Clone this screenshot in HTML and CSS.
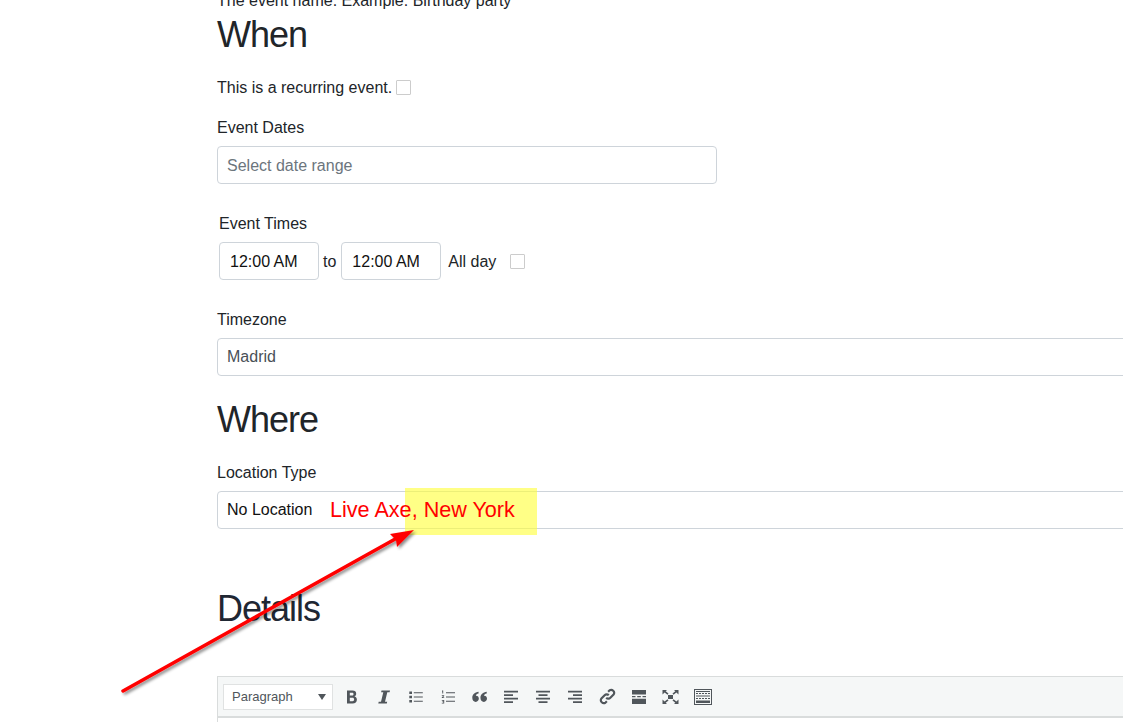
FILE: index.html
```html
<!DOCTYPE html>
<html lang="en">
<head>
<meta charset="utf-8">
<title>Event form</title>
<link rel="stylesheet" href="styles.css">
</head>
<body>
<main class="form">
  <p class="help">The event name. Example: Birthday party</p>
  <h2 class="heading when">When</h2>
  <div class="recurring"><span class="low">This is a recurring event.</span><span class="check"></span></div>
  <label class="label dates-label">Event Dates</label>
  <div class="control short placeholder">Select date range</div>
  <div class="times">
    <label class="label times-label">Event Times</label>
    <div class="times-row">
      <div class="control time">12:00 AM</div>
      <span class="to low">to</span>
      <div class="control time">12:00 AM</div>
      <span class="allday low">All day</span>
      <span class="check"></span>
    </div>
  </div>
  <label class="label tz-label">Timezone</label>
  <div class="control wide muted">Madrid</div>
  <h2 class="heading where">Where</h2>
  <label class="label loc-label">Location Type</label>
  <div class="control wide loc">No Location</div>
  <h2 class="heading details">Details</h2>
  <div class="toolbar">
    <div class="select"><span>Paragraph</span><i class="caret"></i></div>
    <div class="tools">
      <span class="tool"><svg class="ic b" viewBox="0 0 14 14"><path d="M2 .5h5.500c2.400 0 3.700 1.200 3.700 3.200 0 1.300-.7 2.300-1.800 2.700 1.500.3 2.500 1.400 2.500 3 0 2.400-1.700 4.100-4.200 4.100H2V.5zm2.800 2.300v2.800h2.300c.9 0 1.400-.5 1.400-1.400s-.5-1.400-1.400-1.400H4.800zm0 5v3.400h2.700c1 0 1.600-.6 1.600-1.700s-.6-1.700-1.600-1.700H4.800z"/></svg></span>
      <span class="tool"><svg class="ic" viewBox="0 0 14 14"><path d="M4.500.5h8.500l-.4 1.700h-2.300L8 11.800h2.200l-.4 1.700H1.300l.4-1.700h2.300l2.300-9.600H4.100z"/></svg></span>
      <span class="tool"><svg class="ic" viewBox="0 0 14 14"><path d="M.3 1.500h2.700v2.400H.3zM.3 5.800h2.700v2.400H.3zM.3 10.100h2.700v2.400H.3zM4.800 2.200h9v1h-9zM4.800 6.500h9v1h-9zM4.800 10.800h9v1h-9z"/></svg></span>
      <span class="tool"><svg class="ic" viewBox="0 0 14 14"><path d="M1 .5h1.200v3H1.300V1.400H1zM.8 5.300h2.400V6L1.900 7.300h1.300V8H.8v-.7l1.400-1.300H.8zM.8 10h2.400v3.500H.8v-.7h1.500v-.7H1.200v-.6h1.100v-.8H.8zM5 2.200h9v1H5zM5 6.500h9v1H5zM5 10.800h9v1H5z"/></svg></span>
      <span class="tool"><svg class="ic quote" viewBox="0 0 16 14"><path d="M7 1.500v1.800C5.200 3.700 4.300 4.500 4.100 5.700 6 5.500 7.300 6.900 7.300 8.700c0 2-1.400 3.500-3.300 3.500C1.800 12.200.3 10.400.3 7.800.3 4.400 3 2 7 1.500zM15.700 1.500v1.800c-1.800.4-2.700 1.200-2.900 2.400 1.900-.2 3.200 1.200 3.200 3 0 2-1.400 3.500-3.300 3.500-2.200 0-3.700-1.800-3.700-4.400C9 4.400 11.700 2 15.700 1.500z"/></svg></span>
      <span class="tool"><svg class="ic" viewBox="0 0 14 14"><path d="M0 .8h14v1.600H0zM0 4.300h9v1.600H0zM0 7.800h14v1.600H0zM0 11.300h9v1.600H0z"/></svg></span>
      <span class="tool"><svg class="ic" viewBox="0 0 14 14"><path d="M0 .8h14v1.600H0zM2.500 4.300h9v1.600h-9zM0 7.800h14v1.600H0zM2.500 11.300h9v1.600h-9z"/></svg></span>
      <span class="tool"><svg class="ic" viewBox="0 0 14 14"><path d="M0 .8h14v1.600H0zM5 4.300h9v1.600H5zM0 7.800h14v1.600H0zM5 11.300h9v1.600H5z"/></svg></span>
      <span class="tool"><svg class="ic link" viewBox="0 0 16 16"><path fill="none" stroke="currentColor" stroke-width="2" d="M6.800 9.200a2.700 2.700 0 0 0 3.900 0l3-3a2.800 2.800 0 0 0-3.900-3.900L8.600 3.500M9.200 6.800a2.700 2.700 0 0 0-3.900 0l-3 3a2.800 2.800 0 0 0 3.900 3.900l1.200-1.200"/></svg></span>
      <span class="tool"><svg class="ic hr" viewBox="0 0 14 14"><path d="M0 0h14v4.500H0zM0 6h3.500v1.200H0zM5.200 6h3.600v1.200H5.200zM10.500 6H14v1.200h-3.500zM0 8.800h14V14H0z"/></svg></span>
      <span class="tool"><svg class="ic full" viewBox="0 0 16 14"><path d="M0 0h4.500L3.200 1.300 6 3.600 5 4.800 2.100 2.500 0 4.500zM16 0v4.500l-2.100-2L11 4.800 10 3.600l2.800-2.300L11.500 0zM0 14V9.500l2.100 2L5 9.200l1 1.200-2.800 2.300L4.500 14zM16 14h-4.500l1.300-1.300L10 10.400l1-1.200 2.900 2.300L16 9.500z"/><path d="M5.500 5h5v4h-5z"/></svg></span>
      <span class="tool"><svg class="ic kb" viewBox="0 0 18 16"><path fill-rule="evenodd" d="M0 0h18v16H0zM1 1v14h16V1z"/><path d="M2 2h14v1H2zM2 4h2v1H2zM5 4h2v1H5zM8 4h2v1H8zM11 4h2v1h-2zM14 4h2v1h-2zM2 6.500h14v1H2zM2 9h2v1H2zM5 9h2v1H5zM8 9h2v1H8zM11 9h2v1h-2zM14 9h2v1h-2zM2 11.500h14V14H2z"/></svg></span>
    </div>
  </div>
  <div class="editor"></div>
</main>

<div class="marker"></div>
<div class="note">Live Axe, New York</div>
<svg class="arrow" viewBox="0 0 1123 722" aria-hidden="true">
  <defs><filter id="sh" x="-10%" y="-10%" width="120%" height="120%"><feDropShadow dx="2" dy="2" stdDeviation="1.500" flood-color="#000" flood-opacity=".45"/></filter></defs>
  <g filter="url(#sh)" fill="#f00">
    <path d="M123 691L397 538" stroke="#f00" stroke-width="3.500" stroke-linecap="round"/>
    <path d="M414 530L397 547 396 540 390 534z"/>
  </g>
</svg>
</body>
</html>
```
FILE: styles.css
```css
html, body { margin: 0; height: 722px; overflow: hidden; background: #fff; }
body { font-family: "Liberation Sans", Arial, sans-serif; color: #212529; font-size: 16px; position: relative; }
.form { width: 1000px; margin-left: 217px; margin-top: -8px; }
.help { margin: 0; line-height: 17px; }
.heading { font-weight: 400; font-size: 36px; letter-spacing: -1px; line-height: 42px; margin: 0; }
.when { margin-top: 5px; }
.low { padding-top: 2px; }
.recurring { display: flex; align-items: center; gap: 4px; height: 20px; margin-top: 21px; }
.check { width: 13px; height: 13px; border: 1px solid #ccc; border-radius: 1px; display: block; background: #fff; }
.label { display: block; line-height: 20px; }
.dates-label { margin-top: 21px; }
.control { box-sizing: border-box; height: 38px; border: 1px solid #ced4da; border-radius: 4px; display: flex; align-items: center; padding: 0 9px; background: #fff; }
.short { width: 500px; margin-top: 8px; }
.placeholder { color: #6c757d; padding-top: 2px; }
.times { margin-left: 2px; margin-top: 30px; }
.times-row { display: flex; align-items: center; margin-top: 8px; }
.time { width: 100px; color: #111; padding: 2px 10px 0; }
.to { margin: 0 5px 0 4px; }
.allday { margin: 0 14px 0 7px; }
.tz-label { margin-top: 30px; }
.wide { width: 1000px; margin-top: 8px; }
.muted { color: #495057; }
.where { margin-top: 23px; }
.loc-label { margin-top: 22px; }
.loc { color: #111; }
.details { margin-top: 59px; color: #1f2733; }
.toolbar { box-sizing: border-box; height: 42px; margin-top: 46px; width: 1000px; display: flex; align-items: center; padding-left: 5px; background: #f5f7f7; border: 1px solid #d9dcdc; border-bottom-width: 2px; color: #50565b; }
.select { box-sizing: border-box; width: 110px; height: 26px; background: #fff; border: 1px solid #e0e2e2; display: flex; align-items: center; justify-content: space-between; padding: 0 6px 0 8px; font-size: 13px; }
.caret { width: 0; height: 0; border-left: 4px solid transparent; border-right: 4px solid transparent; border-top: 6px solid #50565b; margin-top: 1px; }
.tools { display: flex; align-items: center; margin-left: 3px; }
.tool { width: 31.900px; display: flex; justify-content: center; }
.ic { width: 14px; height: 14px; fill: currentColor; display: block; flex: none; }
.quote { width: 15px; }
.link { width: 17px; height: 17px; }
.full { width: 17px; }
.kb { width: 18px; height: 16px; }
.editor { border-left: 1px solid #d9dcdc; height: 20px; }
.marker { position: absolute; left: 405px; top: 488px; width: 132px; height: 47px; background: rgba(255, 255, 60, .62); }
.note { position: absolute; left: 330px; top: 498px; color: #f00; font-size: 21.600px; line-height: 24px; }
.arrow { position: absolute; left: 0; top: 0; width: 1123px; height: 722px; pointer-events: none; }
```
